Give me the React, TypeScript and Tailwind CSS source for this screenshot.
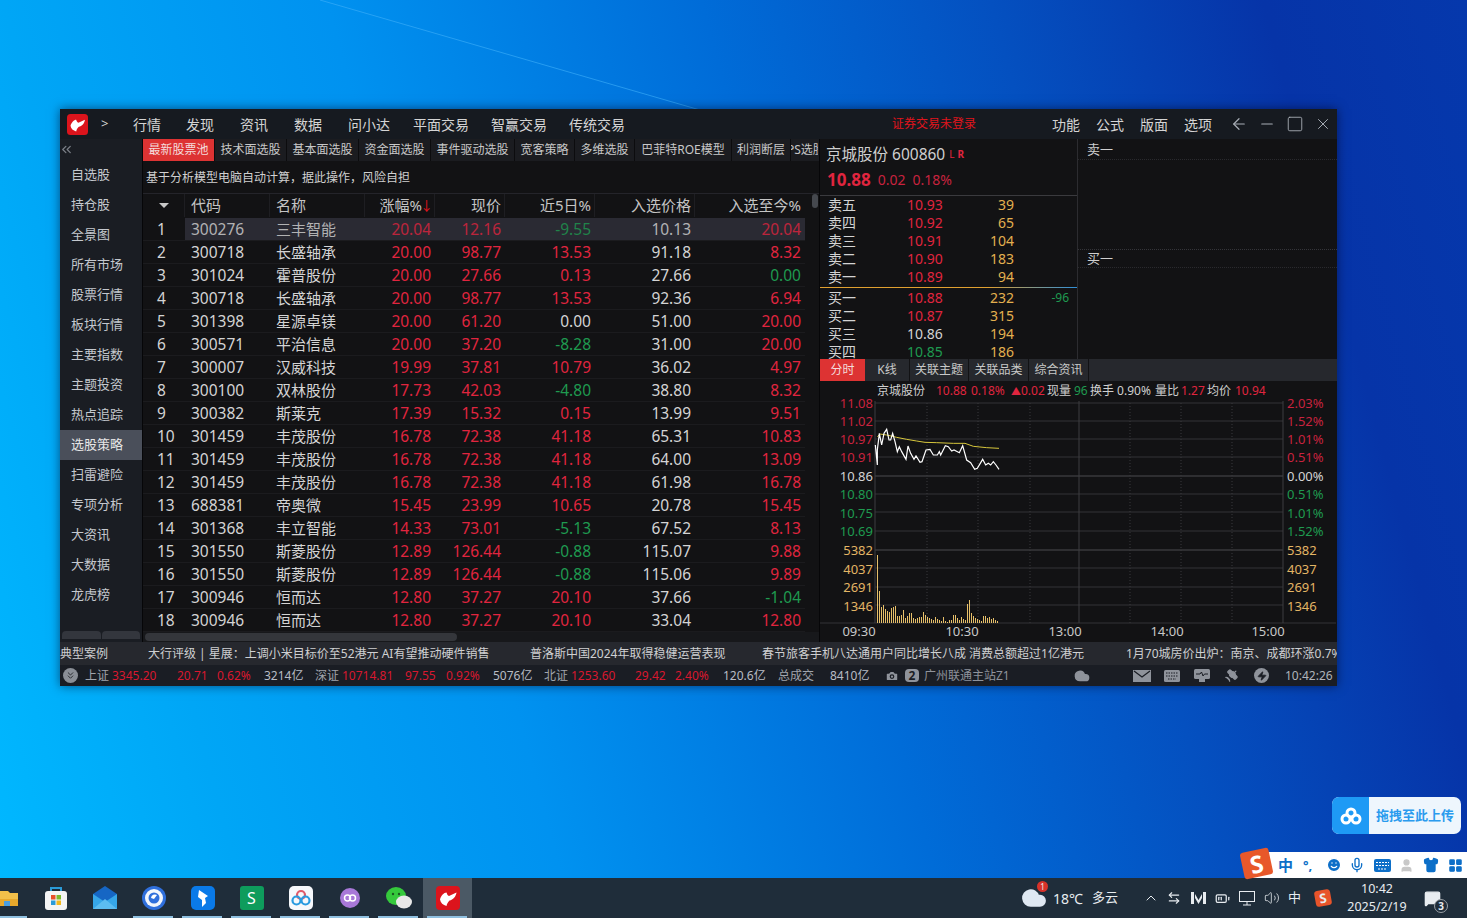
import { ArrowLeft, Minus, Square, X, ChevronUp, ChevronsDown, ChevronsLeft, Satellite, Zap, Cloud, Camera, Volume2, MessageSquare, Smile, Mic, Shirt, LayoutGrid, BatteryMedium, ArrowLeftRight, User } from 'lucide-react';

const RED = 'text-[#e0253f]';
const GREEN = 'text-[#1f9a50]';
const WHITE = 'text-[#d4d4d4]';

const MENU: [string, number][] = [['行情', 53], ['发现', 54], ['资讯', 54], ['数据', 54], ['问小达', 65], ['平面交易', 78], ['智赢交易', 78], ['传统交易', 78]];
const SIDE = ['自选股', '持仓股', '全景图', '所有市场', '股票行情', '板块行情', '主要指数', '主题投资', '热点追踪', '选股策略', '扫雷避险', '专项分析', '大资讯', '大数据', '龙虎榜'];
const TABS: [string, number][] = [['最新股票池', 72], ['技术面选股', 72], ['基本面选股', 72], ['资金面选股', 72], ['事件驱动选股', 84], ['宽客策略', 60], ['多维选股', 60], ['巴菲特ROE模型', 97], ['利润断层', 59]];

const ROWS: [string, string, string, string, string, string, string][] = [
  ['300276', '三丰智能', '20.04', '12.16', '-9.55', '10.13', '20.04'],
  ['300718', '长盛轴承', '20.00', '98.77', '13.53', '91.18', '8.32'],
  ['301024', '霍普股份', '20.00', '27.66', '0.13', '27.66', '0.00'],
  ['300718', '长盛轴承', '20.00', '98.77', '13.53', '92.36', '6.94'],
  ['301398', '星源卓镁', '20.00', '61.20', '0.00', '51.00', '20.00'],
  ['300571', '平治信息', '20.00', '37.20', '-8.28', '31.00', '20.00'],
  ['300007', '汉威科技', '19.99', '37.81', '10.79', '36.02', '4.97'],
  ['300100', '双林股份', '17.73', '42.03', '-4.80', '38.80', '8.32'],
  ['300382', '斯莱克', '17.39', '15.32', '0.15', '13.99', '9.51'],
  ['301459', '丰茂股份', '16.78', '72.38', '41.18', '65.31', '10.83'],
  ['301459', '丰茂股份', '16.78', '72.38', '41.18', '64.00', '13.09'],
  ['301459', '丰茂股份', '16.78', '72.38', '41.18', '61.98', '16.78'],
  ['688381', '帝奥微', '15.45', '23.99', '10.65', '20.78', '15.45'],
  ['301368', '丰立智能', '14.33', '73.01', '-5.13', '67.52', '8.13'],
  ['301550', '斯菱股份', '12.89', '126.44', '-0.88', '115.07', '9.88'],
  ['301550', '斯菱股份', '12.89', '126.44', '-0.88', '115.06', '9.89'],
  ['300946', '恒而达', '12.80', '37.27', '20.10', '37.66', '-1.04'],
  ['300946', '恒而达', '12.80', '37.27', '20.10', '33.04', '12.80'],
];

const tone = (v: string) => (v.startsWith('-') ? GREEN : Number(v) === 0 ? WHITE : RED);

const SELL = [['卖五', '10.93', '39'], ['卖四', '10.92', '65'], ['卖三', '10.91', '104'], ['卖二', '10.90', '183'], ['卖一', '10.89', '94']];
const BUY = [['买一', '10.88', '232', '-96'], ['买二', '10.87', '315', ''], ['买三', '10.86', '194', ''], ['买四', '10.85', '186', '']];

const WHITE_LINE = [[166,195],[172,255],[172,210],[178,160],[185,195],[192,160],[200,148],[207,180],[212,180],[218,160],[225,185],[232,215],[238,200],[245,215],[258,238],[264,198],[272,220],[282,238],[288,228],[300,247],[306,245],[318,210],[330,208],[340,225],[352,225],[358,215],[362,225],[376,197],[385,200],[395,213],[402,210],[418,218],[428,197],[440,240],[452,248],[464,268],[472,265],[488,238],[497,255],[505,250],[512,255],[520,245],[528,255],[537,268]];
const AVG_LINE = [[172,170],[180,162],[200,165],[230,172],[260,178],[290,183],[315,187],[350,188],[400,190],[435,190],[460,199],[500,203],[537,205]];
const toPoints = (pts: number[][]) => pts.map(([x, y]) => `${820 + x / 3},${380 + y / 3}`).join(' ');

const VOLUME = [68,32,16,18,14,12,11,15,16,17,7,7,8,13,5,7,10,10,5,4,5,6,6,11,8,6,5,4,3,6,4,3,2,6,2,1,3,3,8,8,5,3,6,4,3,19,23,10,7,5,4,3,2,7,7,5,6,4,5,3,2];

const GRID_Y = [403, 421, 439, 457, 476, 494, 512, 531, 550, 568, 587, 605, 623];
const LEFT_AXIS: [string, number, string][] = [['11.08', 403, '#c9233f'], ['11.02', 421, '#c9233f'], ['10.97', 439, '#c9233f'], ['10.91', 457, '#c9233f'], ['10.86', 476, '#d4d4d4'], ['10.80', 494, '#1f9a50'], ['10.75', 513, '#1f9a50'], ['10.69', 531, '#1f9a50'], ['5382', 550, '#e3b565'], ['4037', 569, '#e3b565'], ['2691', 587, '#e3b565'], ['1346', 606, '#e3b565']];
const RIGHT_AXIS: [string, number, string][] = [['2.03%', 403, '#c9233f'], ['1.52%', 421, '#c9233f'], ['1.01%', 439, '#c9233f'], ['0.51%', 457, '#c9233f'], ['0.00%', 476, '#d4d4d4'], ['0.51%', 494, '#1f9a50'], ['1.01%', 513, '#1f9a50'], ['1.52%', 531, '#1f9a50'], ['5382', 550, '#e3b565'], ['4037', 569, '#e3b565'], ['2691', 587, '#e3b565'], ['1346', 606, '#e3b565']];

const TICKER: [string, number][] = [['典型案例', 88], ['大行评级 | 星展：上调小米目标价至52港元 AI有望推动硬件销售', 382], ['普洛斯中国2024年取得稳健运营表现', 232], ['春节旅客手机八达通用户同比增长八成 消费总额超过1亿港元', 364], ['1月70城房价出炉：南京、成都环涨0.7%', 240]];

const STATUS: [string, number, string][] = [
  ['上证', 27, 'text-[#a0a4ac]'], ['3345.20', 65, 'text-[#d8182f]'], ['20.71', 40, 'text-[#d8182f]'], ['0.62%', 47, 'text-[#d8182f]'], ['3214亿', 51, 'text-[#b8bcc4]'],
  ['深证', 27, 'text-[#a0a4ac]'], ['10714.81', 63, 'text-[#d8182f]'], ['97.55', 41, 'text-[#d8182f]'], ['0.92%', 47, 'text-[#d8182f]'], ['5076亿', 51, 'text-[#b8bcc4]'],
  ['北证', 27, 'text-[#a0a4ac]'], ['1253.60', 64, 'text-[#d8182f]'], ['29.42', 40, 'text-[#d8182f]'], ['2.40%', 48, 'text-[#d8182f]'], ['120.6亿', 55, 'text-[#b8bcc4]'],
  ['总成交', 52, 'text-[#a0a4ac]'], ['8410亿', 55, 'text-[#b8bcc4]'],
];

function AppLogo({ size = 22 }: { size?: number }) {
  return (
    <svg width={size} height={size} viewBox="0 0 24 24">
      <rect width="24" height="24" rx="4" fill="#dc141c" />
      <path d="M4 13.5C5 9.5 8 6.5 10.5 6.5C11 8 11.5 9.5 13 10L20.5 6.5C20 10.5 17 14 13.5 14.5C12 16 11 17.5 10.5 20C7 19 4.5 17 4 13.5Z" fill="#fff" />
    </svg>
  );
}

function Chart() {
  return (
    <svg width="516" height="241" viewBox="820 401 516 241" className="block overflow-visible">
      {GRID_Y.map((y) => (
        <line key={y} x1="875" x2="1283" y1={y} y2={y} stroke={y === 476 || y === 550 ? '#4a4a4e' : '#333337'} />
      ))}
      <line x1="820" x2="875" y1="623" y2="623" stroke="#333337" />
      <line x1="1283" x2="1336" y1="623" y2="623" stroke="#333337" />
      {[927, 978, 1030, 1130, 1181, 1232].map((x) => (
        <line key={x} x1={x} x2={x} y1="403" y2="623" stroke="#38383c" strokeDasharray="1 2" />
      ))}
      {[875, 1079, 1283].map((x) => (
        <line key={x} x1={x} x2={x} y1="401" y2="623" stroke="#3c3c40" />
      ))}
      {VOLUME.map((h, i) => (
        <rect key={i} x={877 + i * 2} y={623 - h} width="1" height={h} fill="#e6bf6a" />
      ))}
      <polyline points={toPoints(AVG_LINE)} fill="none" stroke="#d6c63c" strokeWidth="1" />
      <polyline points={toPoints(WHITE_LINE)} fill="none" stroke="#ffffff" strokeWidth="1.2" />
      {LEFT_AXIS.map(([t, y, c]) => (
        <text key={t} x="873" y={y + 4.5} textAnchor="end" fill={c} className="text-[13px]">{t}</text>
      ))}
      {RIGHT_AXIS.map(([t, y, c]) => (
        <text key={t + y} x="1287" y={y + 4.5} fill={c} className="text-[13px]">{t}</text>
      ))}
      {[['09:30', 859], ['10:30', 962], ['13:00', 1065], ['14:00', 1167], ['15:00', 1268]].map(([t, x]) => (
        <text key={t} x={x} y="636" textAnchor="middle" fill="#c8c8c8" className="text-[13px]">{t}</text>
      ))}
    </svg>
  );
}

function QuoteRow({ label, price, vol, diff }: { label: string; price: string; vol: string; diff?: string }) {
  const c = Number(price) > 10.86 ? RED : Number(price) < 10.86 ? GREEN : WHITE;
  return (
    <div className="grid h-[18px] grid-cols-[79px_60px_47px_55px] items-center pl-2 text-[14px] leading-[18px]">
      <span className={WHITE}>{label}</span>
      <span className={c}>{price}</span>
      <span className="text-right text-[#e3b04f]">{vol}</span>
      <span className={`text-right text-[12px] ${GREEN}`}>{diff}</span>
    </div>
  );
}

function StatusIcons() {
  return (
    <>
      <svg width="18" height="14" viewBox="0 0 18 14" className="ml-[43px]"><rect y="1" width="18" height="12" fill="#8f939b" /><path d="M1 2L9 8L17 2" fill="none" stroke="#1a1d24" strokeWidth="1.2" /></svg>
      <svg width="16" height="12" viewBox="0 0 16 12" className="ml-[13px]"><rect width="16" height="12" rx="1.5" fill="#8f939b" /><path d="M2 3H14M2 6H14M4 9H12" stroke="#1a1d24" strokeDasharray="1.5 1" /></svg>
      <svg width="16" height="13" viewBox="0 0 16 13" className="ml-[14px]"><rect width="16" height="10" rx="1.5" fill="#8f939b" /><rect x="5" y="10" width="6" height="3" fill="#8f939b" /><path d="M2 5H6L7.5 3L9 7L10.5 5H14" fill="none" stroke="#1a1d24" /></svg>
      <Satellite size={15} className="ml-[14px] fill-[#8f939b]" />
      <span className="ml-[15px] flex h-[15px] w-[15px] items-center justify-center rounded-full bg-[#8f939b]"><Zap size={10} className="fill-[#1a1d24] text-[#1a1d24]" /></span>
    </>
  );
}

function Window() {
  return (
    <div className="absolute left-[60px] top-[109px] flex h-[577px] w-[1277px] flex-col overflow-hidden bg-[#121214] shadow-[0_0_10px_rgba(0,0,30,0.55)]">
      {/* title bar */}
      <div className="flex h-[30px] shrink-0 items-center bg-[#161a20] text-[14px] text-[#d4d4d4]">
        <div className="ml-[7px] w-[21px]"><AppLogo size={21} /></div>
        <span className="ml-[13px] w-[32px] text-[13px]">&gt;</span>
        <div className="flex">
          {MENU.map(([m, w]) => (
            <span key={m} style={{ width: w }}>{m}</span>
          ))}
        </div>
        <span className="ml-[245px] text-[12px] text-[#e0141c]">证券交易未登录</span>
        <div className="ml-[76px] flex gap-[15px]">
          {['功能', '公式', '版面', '选项'].map((m) => <span key={m} className="w-[29px]">{m}</span>)}
        </div>
        <div className="ml-[17px] flex items-center gap-[10px] text-[#a8aeb6]">
          <ArrowLeft size={18} strokeWidth={1.6} />
          <Minus size={18} strokeWidth={1.5} />
          <Square size={18} strokeWidth={1.2} />
          <X size={18} strokeWidth={1.3} />
        </div>
      </div>

      <div className="flex h-[503px] shrink-0">
        {/* sidebar */}
        <div className="flex w-[82px] shrink-0 flex-col bg-[#1a1d23] text-[13px] text-[#c4c8ce]">
          <div className="flex h-[21px] items-center"><ChevronsLeft size={15} className="-ml-[1px] text-[#7c8088]" /></div>
          <div className="flex flex-col">
            {SIDE.map((s) => (
              <div key={s} className={`flex h-[30px] items-center pl-[11px] ${s === '选股策略' ? 'bg-[#4a4f5a] text-[#e6e6e6]' : ''}`}>{s}</div>
            ))}
          </div>
          <div className="mb-[3px] mt-auto flex gap-[1px] pl-[2px]">
            <div className="h-[8px] w-[39px] rounded-t-sm bg-[#33363d]" />
            <div className="h-[8px] w-[38px] rounded-t-sm bg-[#33363d]" />
          </div>
        </div>
        <div className="w-[1px] shrink-0 bg-[#060608]" />

        {/* stock table */}
        <div className="flex w-[676px] shrink-0 flex-col">
          <div className="flex h-[22px] shrink-0 overflow-hidden bg-[#1b1c20] text-[12px] text-[#c8c8c8]">
            {TABS.map(([t, w]) => (
              <div key={t} style={{ width: w }} className={`flex shrink-0 items-center justify-center border-r border-[#0c0c0e] ${t === '最新股票池' ? 'bg-[#dd3333] text-[#f4dcdc]' : ''}`}>{t}</div>
            ))}
            <div className="w-[27px] shrink-0 overflow-hidden">
              <span className="-ml-[4px] block whitespace-nowrap leading-[22px]">PS选股</span>
            </div>
          </div>
          <div className="flex h-[32px] shrink-0 items-center pl-[3px] pt-[1px] text-[12px] text-[#d0d0d0]">基于分析模型电脑自动计算，据此操作，风险自担</div>
          <div className="grid h-[25px] shrink-0 grid-cols-[42px_85px_95px_70px_70px_90px_100px_110px] border-t border-[#24242a] pb-[2px] text-[15px] text-[#c4c4c4]">
            <div className="flex items-center justify-center border-r border-[#1e1e22]"><span className="mt-[1px] border-x-[5px] border-t-[5px] border-x-transparent border-t-[#c8c8c8]" /></div>
            <div className="flex items-center border-r border-[#1e1e22] pl-[6px]">代码</div>
            <div className="flex items-center border-r border-[#1e1e22] pl-[6px]">名称</div>
            <div className="flex items-center justify-end border-r border-[#1e1e22] pr-[1px]">涨幅%<span className="-ml-[2px] text-[13px] text-[#e0141c]">↓</span></div>
            <div className="flex items-center justify-end border-r border-[#1e1e22] pr-[3px]">现价</div>
            <div className="flex items-center justify-end border-r border-[#1e1e22] pr-[3px]">近5日%</div>
            <div className="flex items-center justify-end border-r border-[#1e1e22] pr-[3px]">入选价格</div>
            <div className="flex items-center justify-end pr-[4px]">入选至今%</div>
          </div>
          <div className="relative flex-1">
            <div className="flex flex-col">
              {ROWS.map((r, i) => {
                const dim = i === 0 ? 'opacity-80' : '';
                const todayTone = r[6] === '0.00' ? GREEN : tone(r[6]);
                return (
                  <div key={i} className={`grid h-[23px] w-[662px] grid-cols-[42px_85px_95px_70px_70px_90px_100px_110px] items-center border-b border-[#1b1b1e] text-[15.5px] leading-[22px] ${i === 0 ? 'bg-[#2a2a33]' : ''}`}>
                    <span className={`flex h-full items-center bg-[#121214] pl-[14px] ${WHITE}`}>{i + 1}</span>
                    <span className={`pl-[6px] ${WHITE} ${dim}`}>{r[0]}</span>
                    <span className={`pl-[6px] text-[15px] ${WHITE} ${dim}`}>{r[1]}</span>
                    <span className={`pr-[4px] text-right ${RED} ${dim}`}>{r[2]}</span>
                    <span className={`pr-[4px] text-right ${RED} ${dim}`}>{r[3]}</span>
                    <span className={`pr-[4px] text-right ${tone(r[4])} ${dim}`}>{r[4]}</span>
                    <span className={`pr-[4px] text-right ${WHITE} ${dim}`}>{r[5]}</span>
                    <span className={`pr-[4px] text-right ${todayTone} ${dim}`}>{r[6]}</span>
                  </div>
                );
              })}
            </div>
            <div className="absolute -top-[24px] right-[1px] h-[14px] w-[6px] rounded-sm bg-[#45484e]" />
            <div className="absolute bottom-0 left-0 right-0 h-[10px] bg-[#17181b]">
              <div className="ml-[2px] mt-[1px] h-[8px] w-[312px] rounded bg-[#34363b]" />
            </div>
          </div>
        </div>
        <div className="w-[1px] shrink-0 bg-[#060608]" />

        {/* right panel */}
        <div className="flex w-[517px] shrink-0 flex-col">
          <div className="flex h-[220px] shrink-0 overflow-hidden">
            <div className="w-[258px] shrink-0 border-r border-[#2c2c30]">
              <div className="flex h-[31px] items-center pl-[6px] text-[15.5px] text-[#cfcfcf]">
                京城股份 600860
                <span className="ml-[4px] text-[10px] text-[#e0253f]">L</span>
                <span className="ml-[3px] text-[10px] font-bold text-[#e0253f]">R</span>
              </div>
              <div className={`flex h-[19px] items-center gap-[7px] pl-[7px] ${RED}`}>
                <span className="text-[17px] font-bold">10.88</span>
                <span className="text-[14px] text-[#c9233f]">0.02</span>
                <span className="text-[14px] text-[#c9233f]">0.18%</span>
              </div>
              <div className="mt-[6px] h-[1px] bg-[#3a3a3e]" />
              {SELL.map(([l, p, v]) => <QuoteRow key={l} label={l} price={p} vol={v} />)}
              <div className="my-[1px] h-[1px] bg-[linear-gradient(90deg,#e0a030_0%,#e0a030_65%,#2f8fd8_100%)]" />
              {BUY.map(([l, p, v, d]) => <QuoteRow key={l} label={l} price={p} vol={v} diff={d} />)}
            </div>
            <div className="flex flex-1 flex-col text-[13px] text-[#cfcfcf]">
              <div className="h-[21px] border-b border-dotted border-[#2a2a2e] pl-[9px] leading-[20px]">卖一</div>
              <div className="h-[89px]" />
              <div className="h-[19px] border-b border-dotted border-t border-b-[#2a2a2e] border-t-[#35353a] pl-[9px] leading-[17px]">买一</div>
            </div>
          </div>
          <div className="flex h-[22px] shrink-0 items-center bg-[#26282d] text-[12px] text-[#c8c8c8]">
            <div className="flex h-full w-[45px] items-center justify-center bg-[#dd3333] text-[#f4dcdc]">分时</div>
            <div className="flex h-full w-[45px] items-center justify-center border-r border-[#121214]">K线</div>
            <div className="flex h-full w-[59px] items-center justify-center border-r border-[#121214]">关联主题</div>
            <div className="flex h-full w-[60px] items-center justify-center border-r border-[#121214]">关联品类</div>
            <div className="flex h-full w-[60px] items-center justify-center border-r border-[#121214]">综合资讯</div>
          </div>
          <div className="flex h-[20px] shrink-0 items-center whitespace-nowrap pl-[57px] text-[12px] text-[#cfcfcf]">
            <span className="w-[59px]">京城股份</span>
            <span className={`w-[35px] ${RED}`}>10.88</span>
            <span className={`w-[40px] ${RED}`}>0.18%</span>
            <span className={`w-[36px] ${RED}`}><span className="text-[10px]">▲</span>0.02</span>
            <span className="w-[27px]">现量</span>
            <span className={`w-[16px] ${GREEN}`}>96</span>
            <span className="w-[65px]">换手 0.90%</span>
            <span className="w-[26px]">量比</span>
            <span className={`w-[26px] ${RED}`}>1.27</span>
            <span className="w-[28px]">均价</span>
            <span className={RED}>10.94</span>
          </div>
          <Chart />
        </div>
      </div>

      {/* ticker */}
      <div className="flex h-[23px] shrink-0 items-center overflow-hidden whitespace-nowrap bg-[#26282e] text-[12px] text-[#cfd0d2]">
        {TICKER.map(([t, w]) => (
          <span key={t} style={{ width: w }} className="shrink-0">{t}</span>
        ))}
      </div>

      {/* status bar */}
      <div className="flex h-[21px] shrink-0 items-center whitespace-nowrap bg-[#1a1d24] text-[12px]">
        <div className="ml-[3px] flex h-[15px] w-[15px] items-center justify-center rounded-full bg-[#8a8e96]"><ChevronsDown size={11} className="text-[#24262c]" /></div>
        <div className="ml-[7px] flex">
          {STATUS.map(([t, w, c], i) => (
            <span key={i} style={{ width: w }} className={c}>{t}</span>
          ))}
        </div>
        <div className="flex items-center text-[#8f939b]">
          <Camera size={14} className="fill-[#8f939b] text-[#1a1d24]" />
          <span className="ml-[6px] flex h-[13px] w-[14px] items-center justify-center rounded-sm bg-[#8f939b] font-bold text-[#1a1d24]">2</span>
          <span className="ml-[5px] w-[150px]">广州联通主站Z1</span>
          <Cloud size={16} className="fill-[#8f939b]" />
          <StatusIcons />
          <span className="ml-[16px] text-[#b0b4ba]">10:42:26</span>
        </div>
      </div>
    </div>
  );
}

function TaskIcon({ children, active, lit = true }: { children: React.ReactNode; active?: boolean; lit?: boolean }) {
  return (
    <div className={`relative flex h-full w-[49px] shrink-0 items-center justify-center ${active ? 'bg-[#4b5965]' : ''}`}>
      {children}
      {lit && <div className="absolute bottom-0 left-[4px] right-[5px] h-[2px] bg-[#8fc0e0]" />}
    </div>
  );
}

function Taskbar() {
  return (
    <div className="flex h-[40px] shrink-0 items-center bg-[#1f2d3a] text-white">
      <div className="relative flex h-full w-[27px] items-center">
        <svg width="18" height="20" viewBox="0 0 18 20"><path d="M0 3H8L10 5H18V18H0Z" fill="#f2c04a" /><rect y="11" width="18" height="7" fill="#e8a92c" /><rect x="4" y="13" width="6" height="5" fill="#4a9ee0" /></svg>
        <div className="absolute bottom-0 left-0 right-0 h-[2px] bg-[#8fc0e0]" />
      </div>
      <div className="ml-[4px]" />
      <div className="flex h-full items-center">
        <TaskIcon lit={false}>
          <svg width="24" height="26" viewBox="0 0 24 26"><path d="M7 6V3H17V6" fill="none" stroke="#2a9bd8" strokeWidth="2" /><rect x="1" y="6" width="22" height="19" rx="3" fill="#f4f4f4" /><rect x="7" y="10" width="4.5" height="4.5" fill="#e8502a" /><rect x="12.5" y="10" width="4.5" height="4.5" fill="#7cba2c" /><rect x="7" y="15.5" width="4.5" height="4.5" fill="#2a9bd8" /><rect x="12.5" y="15.5" width="4.5" height="4.5" fill="#f2b81c" /></svg>
        </TaskIcon>
        <TaskIcon lit={false}>
          <svg width="26" height="24" viewBox="0 0 26 24"><path d="M1 8L13 0L25 8V23H1Z" fill="#1666c4" /><path d="M1 8L13 16L25 8V23H1Z" fill="#36a6e8" /><path d="M1 23L13 13L25 23Z" fill="#5cbcf0" /></svg>
        </TaskIcon>
        <TaskIcon>
          <svg width="26" height="26" viewBox="0 0 26 26"><circle cx="13" cy="13" r="12" fill="#2f6fdc" /><circle cx="13" cy="13" r="9" fill="#f2f6fc" /><circle cx="13" cy="13" r="5.5" fill="#2f6fdc" /><path d="M10 13A4 4 0 0 1 16 10L13 14Z" fill="#fff" /></svg>
        </TaskIcon>
        <TaskIcon>
          <svg width="24" height="24" viewBox="0 0 24 24"><rect width="24" height="24" rx="5" fill="#0a7ae8" /><path d="M8 4L17 10L14 12L15 17L11 21L11 14L7 11Z" fill="#fff" /></svg>
        </TaskIcon>
        <TaskIcon>
          <div className="flex h-[24px] w-[24px] items-center justify-center rounded-[3px] bg-[#0e9c5c] text-[16px] leading-none">S</div>
        </TaskIcon>
        <TaskIcon>
          <svg width="24" height="24" viewBox="0 0 24 24"><rect width="24" height="24" rx="5" fill="#f6f8fb" /><circle cx="12" cy="9" r="4" fill="none" stroke="#e05a6a" strokeWidth="2.2" /><circle cx="7.5" cy="14.5" r="4" fill="none" stroke="#2a9be0" strokeWidth="2.2" /><circle cx="16.5" cy="14.5" r="4" fill="none" stroke="#2a9be0" strokeWidth="2.2" /></svg>
        </TaskIcon>
        <TaskIcon>
          <svg width="20" height="20" viewBox="0 0 20 20"><circle cx="10" cy="10" r="10" fill="#a878d8" /><circle cx="7.5" cy="10" r="3" fill="none" stroke="#fff" strokeWidth="1.5" /><circle cx="12.5" cy="10" r="3" fill="none" stroke="#fff" strokeWidth="1.5" /></svg>
        </TaskIcon>
        <TaskIcon>
          <svg width="26" height="22" viewBox="0 0 26 22"><ellipse cx="10" cy="9" rx="10" ry="9" fill="#35c93c" /><ellipse cx="18" cy="15" rx="8" ry="6.5" fill="#e8e8e8" /><circle cx="7" cy="7" r="1.2" fill="#1a5a20" /><circle cx="13" cy="7" r="1.2" fill="#1a5a20" /></svg>
        </TaskIcon>
        <TaskIcon active>
          <AppLogo size={24} />
        </TaskIcon>
      </div>

      <div className="ml-auto flex h-full items-center text-[#e8ecf0]">
        <div className="relative mr-[6px]">
          <Cloud size={26} className="fill-[#dfe8f2] text-[#dfe8f2]" />
          <span className="absolute -right-[1px] -top-[4px] flex h-[11px] w-[11px] items-center justify-center rounded-full bg-[#d8322a] text-[8px] leading-none">1</span>
        </div>
        <span className="text-[14px]">18℃</span>
        <span className="ml-[9px] w-[50px] text-[13px]">多云</span>
        <ChevronUp size={16} strokeWidth={1.5} className="ml-[1px]" />
        <ArrowLeftRight size={14} className="ml-[8px]" />
        <svg width="15" height="12" viewBox="0 0 15 12" className="ml-[10px]" fill="currentColor"><path d="M0 0H3V12H0ZM12 0H15V12H12ZM4 2L7.5 8L11 2V6L7.5 12L4 6Z" /></svg>
        <BatteryMedium size={15} className="ml-[9px]" />
        <svg width="16" height="15" viewBox="0 0 16 15" className="ml-[9px]" fill="none" stroke="currentColor"><rect x="0.5" y="0.5" width="15" height="10" /><path d="M8 11V14M4 14H12" /></svg>
        <Volume2 size={16} strokeWidth={1.2} className="ml-[9px]" />
        <span className="ml-[8px] text-[13px]">中</span>
        <div className="ml-[14px] flex h-[16px] w-[16px] rotate-[-10deg] items-center justify-center rounded-[3px] bg-[#e8542a] text-[13px] font-bold leading-none">S</div>
        <div className="ml-[15px] flex w-[62px] flex-col items-center text-[12.5px] leading-[18px]">
          <span>10:42</span>
          <span>2025/2/19</span>
        </div>
        <div className="relative ml-[16px] mr-[26px]">
          <MessageSquare size={17} className="fill-[#e8ecf0]" />
          <span className="absolute -bottom-[6px] -right-[7px] flex h-[14px] w-[14px] items-center justify-center rounded-full border border-[#9aa0a6] bg-[#1f2d3a] text-[10px] font-bold leading-none">3</span>
        </div>
      </div>
    </div>
  );
}

export default function App() {
  return (
    <div className="relative flex h-[918px] w-[1467px] flex-col overflow-hidden font-[family-name:'Noto_Sans','Noto_Sans_CJK_SC',sans-serif]">
      <div className="relative flex-1 bg-[linear-gradient(75deg,#00b8ff_0%,#00a6f6_14%,#0092f0_33%,#006cd8_55%,#0450c0_72%,#0634a8_88%,#0538ac_100%)]">
        <svg width="1467" height="120" viewBox="0 0 1467 120" className="absolute left-0 top-0">
          <line x1="320" y1="0" x2="700" y2="110" stroke="#3fb0fa" strokeOpacity="0.6" />
        </svg>
      </div>
      <Window />

      {/* cloud-drive drop target */}
      <div className="absolute left-[1332px] top-[797px] flex h-[37px] w-[129px] overflow-hidden rounded-[7px] bg-[#eef6fd]">
        <div className="flex w-[37px] items-center justify-center bg-[#1e9af5]">
          <svg width="22" height="18" viewBox="0 0 22 18" fill="none" stroke="#fff" strokeWidth="3"><circle cx="11" cy="6" r="4" /><circle cx="6" cy="12" r="4" /><circle cx="16" cy="12" r="4" /></svg>
        </div>
        <span className="flex-1 text-center text-[13px] font-bold leading-[37px] text-[#2a9bee]">拖拽至此上传</span>
      </div>

      {/* IME bar */}
      <div className="absolute left-[1252px] top-[852px] flex h-[26px] w-[215px] items-center bg-white pl-[26px] text-[#0d6fc8]">
        <span className="text-[15px] font-bold">中</span>
        <span className="ml-[10px] w-[22px] text-[13px] font-bold leading-none">°,</span>
        <Smile size={16} className="ml-[1px] fill-[#0d6fc8] text-white" />
        <Mic size={16} className="ml-[7px]" />
        <svg width="17" height="13" viewBox="0 0 17 13" className="ml-[9px]"><rect width="17" height="13" rx="2" fill="#0d6fc8" /><path d="M2 3.5H15M2 6.5H15M4 10H13" stroke="#fff" strokeDasharray="2 1" /></svg>
        <User size={15} className="ml-[8px] fill-[#c8c8c8] text-[#c8c8c8]" />
        <Shirt size={16} className="ml-[9px] fill-[#0d6fc8]" />
        <LayoutGrid size={15} className="ml-[9px] fill-[#0d6fc8]" />
      </div>
      <div className="absolute left-[1242px] top-[850px] flex h-[27px] w-[29px] rotate-[-12deg] items-center justify-center rounded-[3px] bg-[#e8582a] text-[24px] font-bold leading-none text-white">S</div>

      <Taskbar />
    </div>
  );
}
